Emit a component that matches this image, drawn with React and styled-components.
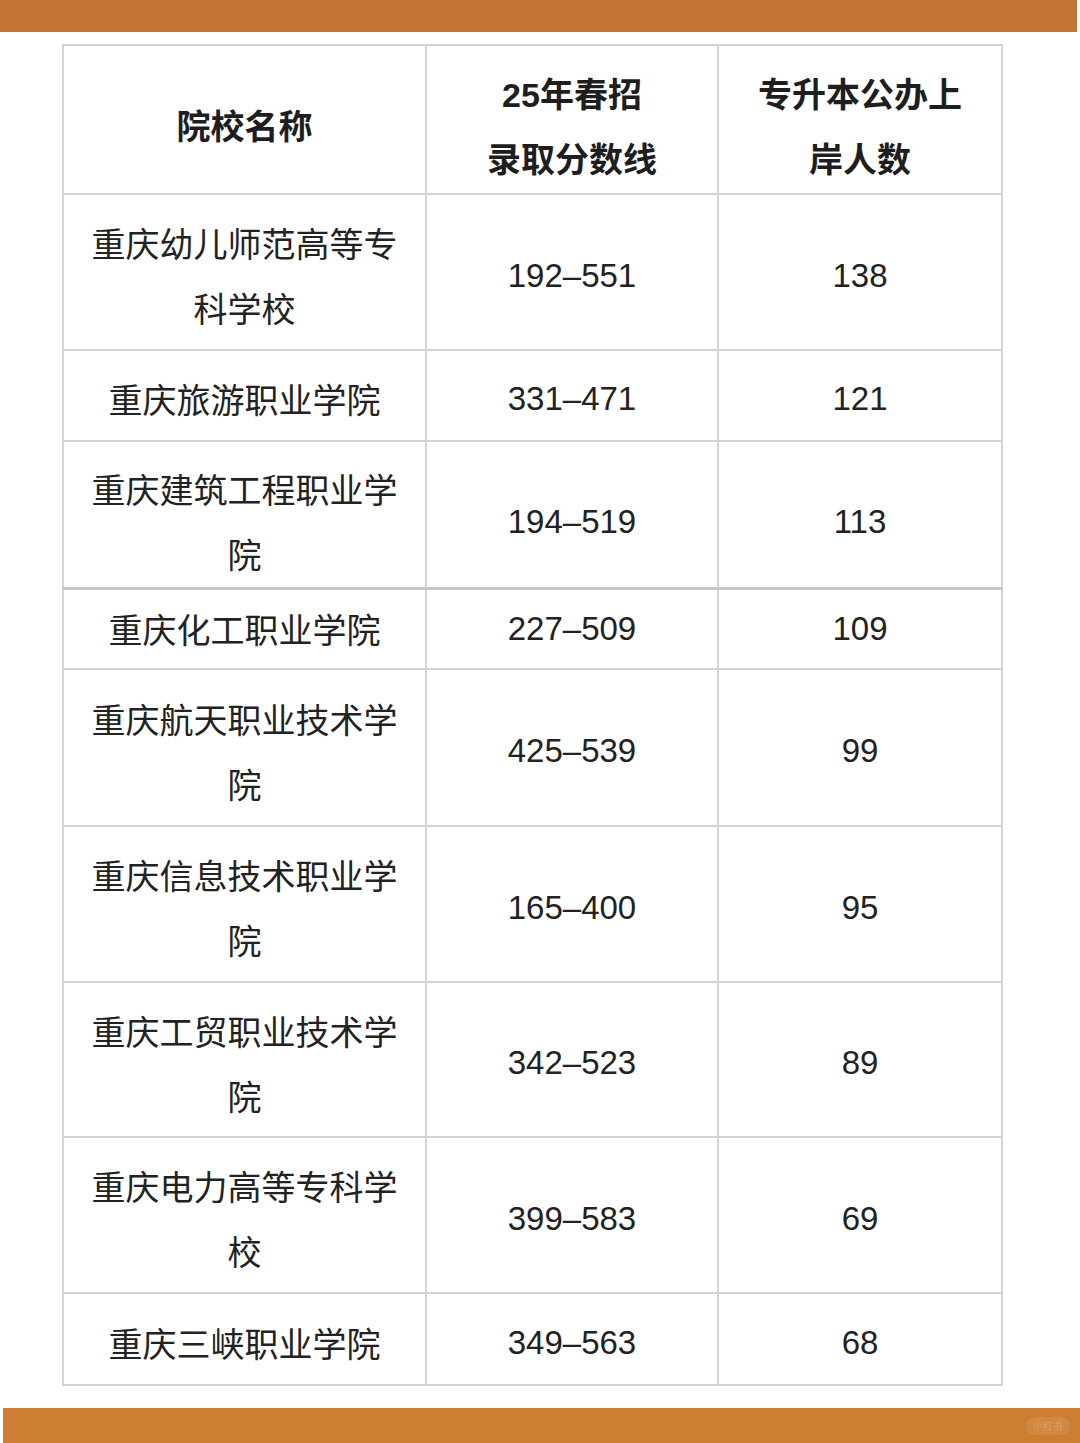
import React from "react";
import styled, { createGlobalStyle } from "styled-components";

const GlobalStyle = createGlobalStyle`
  html, body {
    margin: 0;
    padding: 0;
    background: #ffffff;
  }
  body {
    font-family: "Liberation Sans", "Noto Sans CJK SC", sans-serif;
    color: #222222;
  }
`;

// h: row height, shift: top padding that nudges the text down
const rows = [
  { name: "重庆幼儿师范高等专科学校", range: "192–551", count: "138", h: 156, shift: 6 },
  { name: "重庆旅游职业学院", range: "331–471", count: "121", h: 91, shift: 6 },
  { name: "重庆建筑工程职业学院", range: "194–519", count: "113", h: 147, shift: 14, seam: true },
  { name: "重庆化工职业学院", range: "227–509", count: "109", h: 81, shift: 0 },
  { name: "重庆航天职业技术学院", range: "425–539", count: "99", h: 157, shift: 6 },
  { name: "重庆信息技术职业学院", range: "165–400", count: "95", h: 156, shift: 6 },
  { name: "重庆工贸职业技术学院", range: "342–523", count: "89", h: 155, shift: 6 },
  { name: "重庆电力高等专科学校", range: "399–583", count: "69", h: 156, shift: 6 },
  { name: "重庆三峡职业学院", range: "349–563", count: "68", h: 92, shift: 6 },
];

export default function App() {
  return (
    <>
      <GlobalStyle />
      <Page>
        <TopBar />
        <TableWrap>
          <Table>
            <colgroup>
              <col style={{ width: 363 }} />
              <col style={{ width: 292 }} />
              <col style={{ width: 284 }} />
            </colgroup>
            <thead>
              <tr>
                <HeadCell $h={149}>院校名称</HeadCell>
                <HeadCell $h={149}>
                  25年春招
                  <br />
                  录取分数线
                </HeadCell>
                <HeadCell $h={149}>
                  专升本公办上
                  <br />
                  岸人数
                </HeadCell>
              </tr>
            </thead>
            <tbody>
              {rows.map((r) => (
                <Row key={r.name} $seam={r.seam}>
                  <NameCell $h={r.h} $shift={r.shift}>{r.name}</NameCell>
                  <NumCell $h={r.h} $shift={r.shift}>{r.range}</NumCell>
                  <NumCell $h={r.h} $shift={r.shift}>{r.count}</NumCell>
                </Row>
              ))}
            </tbody>
          </Table>
        </TableWrap>
        <BottomBar>
          <Watermark>小红书</Watermark>
        </BottomBar>
      </Page>
    </>
  );
}

const Page = styled.div`
  width: 1080px;
  height: 1443px;
  display: flex;
  flex-direction: column;
  overflow: hidden;
`;

const TopBar = styled.div`
  height: 32px;
  width: 1077px;
  background: #c47536;
  flex-shrink: 0;
`;

const TableWrap = styled.div`
  padding: 12px 0 0 62px;
  flex: 1;
`;

const Table = styled.table`
  border-collapse: collapse;
  table-layout: fixed;
  width: 940px;
`;

const Cell = styled.td`
  border: 2px solid #d3d3d3;
  height: ${(p) => p.$h}px;
  padding: ${(p) => p.$shift || 0}px 24px 0;
  box-sizing: border-box;
  text-align: center;
  vertical-align: middle;
  font-size: 33px;
  line-height: 65px;
  color: #222222;
`;

const HeadCell = styled(Cell).attrs({ as: "th" })`
  font-family: "Liberation Sans", "Noto Sans CJK SC", sans-serif;
  font-weight: 700;
  font-size: 34px;
  padding-top: 16px;
  color: #1e1e1e;
`;

const NameCell = styled(Cell)`
  font-family: "Noto Sans CJK SC", sans-serif;
  font-weight: 400;
  font-size: 34px;
`;

const NumCell = styled(Cell)`
  font-family: "Liberation Sans", "Noto Sans CJK SC", sans-serif;
  font-size: 33px;
`;

const Row = styled.tr`
  td {
    border-bottom-width: ${(p) => (p.$seam ? "3px" : "2px")};
    border-bottom-color: ${(p) => (p.$seam ? "#c8c8c8" : "#d3d3d3")};
  }
`;

const BottomBar = styled.div`
  position: relative;
  height: 35px;
  margin-left: 3px;
  background: #ce7e33;
  flex-shrink: 0;
`;

const Watermark = styled.span`
  position: absolute;
  right: 10px;
  top: 9px;
  padding: 1px 7px;
  border-radius: 10px;
  background: rgba(255, 255, 255, 0.08);
  color: rgba(255, 255, 255, 0.22);
  font-family: "Noto Sans CJK SC", sans-serif;
  font-size: 10px;
  line-height: 16px;
`;
